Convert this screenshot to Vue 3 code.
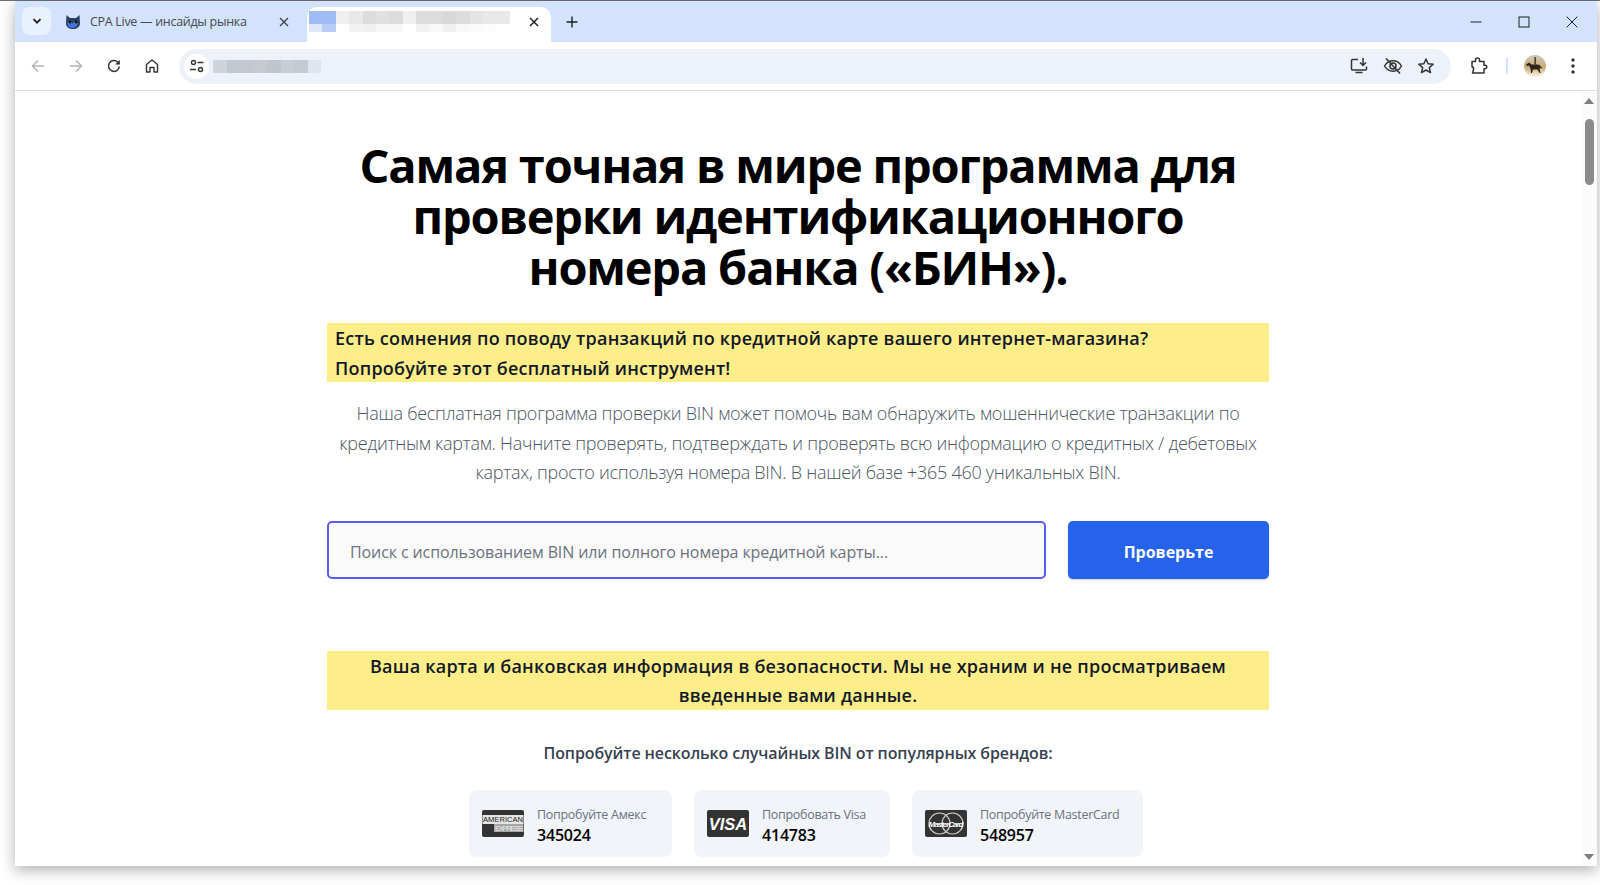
<script setup>
const titleRows = [
  ['#a0bcf5', '#a0bcf5', '#f0f0f0', '#e8e8e8', '#dcdcdc', '#e0e0e0', '#dcdcdc', '#f0f0f0', '#dcdcdc', '#dcdcdc', '#d8d8d8', '#dcdcdc', '#e4e4e4', '#e8e8e8', '#e8e8e8'],
  ['#dfe8fb', '#b9cdf8', '#ffffff', '#f2f2f2', '#f0f0f0', '#f6f6f6', '#f6f6f6', '#ffffff', '#f2f2f2', '#f8f8f8', '#f0f0f0', '#f8f8f8', '#fafafa', '#fcfcfc', '#ffffff']
]
const urlCells = ['#cfd3da', '#c3c7cf', '#c3c7cf', '#c7c9cf', '#c1c5cd', '#c9cdd4', '#c5c9d1', '#dfe4ee']

const brands = [
  { id: 'amex', label: 'Попробуйте Амекс', bin: '345024' },
  { id: 'visa', label: 'Попробовать Visa', bin: '414783' },
  { id: 'mc', label: 'Попробуйте MasterCard', bin: '548957' }
]
</script>

<template>
  <div class="page">
    <div class="window">
      <header class="tabstrip">
        <button class="tab-search">
          <svg width="12" height="12" viewBox="0 0 12 12"><path d="M2.500 4.200 6 7.700l3.500-3.500" fill="none" stroke="#1f1f1f" stroke-width="1.800"/></svg>
        </button>
        <div class="tab">
          <svg class="favicon" width="16" height="16" viewBox="0 0 16 16">
            <path d="M1.500 1 5 4h6l3.500-3 .5 8c0 4-3 6-7 6s-7-2-7-6z" fill="#2c3e63"/>
            <path d="M2.500 9c1-2 3-2.500 4-1l1 2 1-2c1-1.500 3-1 4 1 0 3-2 5-5 5s-5-2-5-5z" fill="#3f74d8"/>
            <circle cx="5" cy="8" r="1.400" fill="#10131a"/>
            <circle cx="11" cy="8" r="1.400" fill="#10131a"/>
          </svg>
          <span class="tab-title">CPA Live — инсайды рынка</span>
          <svg class="tab-close" width="12" height="12" viewBox="0 0 12 12"><path d="M2 2l8 8M10 2l-8 8" stroke="#3c4043" stroke-width="1.300"/></svg>
        </div>
        <div class="tab tab-active">
          <div class="mosaic">
            <div v-for="(row, r) in titleRows" :key="r" class="mosaic-row" :class="{ low: r === 1 }">
              <i v-for="(color, c) in row" :key="c" :style="{ background: color }"></i>
            </div>
          </div>
          <svg class="tab-close" width="12" height="12" viewBox="0 0 12 12"><path d="M2 2l8 8M10 2l-8 8" stroke="#1f1f1f" stroke-width="1.500"/></svg>
        </div>
        <svg class="tab-new" width="14" height="14" viewBox="0 0 14 14"><path d="M7 1.500v11M1.500 7h11" stroke="#1f1f1f" stroke-width="1.400"/></svg>
        <div class="window-controls">
          <svg width="12" height="12" viewBox="0 0 12 12"><path d="M.5 6h11" stroke="#1f1f1f"/></svg>
          <svg width="12" height="12" viewBox="0 0 12 12"><rect x="1" y="1" width="10" height="10" fill="none" stroke="#1f1f1f"/></svg>
          <svg width="12" height="12" viewBox="0 0 12 12"><path d="M.7.700l10.600 10.600M11.300.700.700 11.300" stroke="#1f1f1f"/></svg>
        </div>
      </header>

      <div class="toolbar">
        <div class="nav-icons">
          <svg width="16" height="16" viewBox="0 0 16 16"><path d="M14 8H2.500M8 2.500 2.500 8 8 13.500" fill="none" stroke="#b1b5ba" stroke-width="1.500"/></svg>
          <svg width="16" height="16" viewBox="0 0 16 16"><path d="M2 8h11.500M8 2.500 13.500 8 8 13.500" fill="none" stroke="#b1b5ba" stroke-width="1.500"/></svg>
          <svg width="16" height="16" viewBox="0 0 16 16"><path d="M13.300 8.500A5.400 5.400 0 1 1 11.800 4.200L13.500 6" fill="none" stroke="#333" stroke-width="1.500"/><path d="M13.800 1.800v4.700H9.200z" fill="#333"/></svg>
          <svg width="16" height="16" viewBox="0 0 16 16"><path d="M2.500 14V6.500L8 2l5.500 4.500V14H10V9.500H6V14z" fill="none" stroke="#333" stroke-width="1.400" stroke-linejoin="round"/></svg>
        </div>
        <div class="omnibox">
          <span class="site-chip">
            <svg width="16" height="16" viewBox="0 0 16 16" fill="none" stroke="#333" stroke-width="1.400">
              <circle cx="4.500" cy="4.500" r="2"/><path d="M8.500 4.500h6M1 11.500h6"/><circle cx="11.500" cy="11.500" r="2"/>
            </svg>
          </span>
          <div class="url-mosaic">
            <i v-for="(color, i) in urlCells" :key="i" :style="{ background: color }"></i>
          </div>
          <div class="omni-actions">
            <svg width="20" height="20" viewBox="0 0 20 20" fill="none" stroke="#333" stroke-width="1.500">
              <path d="M9 3.500H3.500a1 1 0 0 0-1 1V13a1 1 0 0 0 1 1h13a1 1 0 0 0 1-1v-2.500M6.500 16.500h7" />
              <path d="M14 2v7M11 6.500l3 3 3-3"/>
            </svg>
            <svg width="20" height="20" viewBox="0 0 20 20" fill="none" stroke="#333" stroke-width="1.500">
              <path d="M1.500 10C3.500 6.500 6.500 4.800 10 4.800s6.500 1.700 8.500 5.200c-2 3.500-5 5.200-8.500 5.200S3.500 13.500 1.500 10z"/>
              <circle cx="10" cy="10" r="3"/><path d="M3 2.500l14 15"/>
            </svg>
            <svg width="18" height="18" viewBox="0 0 18 18"><path d="M9 2l2.100 4.700 5.100.500-3.900 3.400 1.200 5L9 13l-4.500 2.600 1.200-5L1.800 7.200l5.100-.500z" fill="none" stroke="#333" stroke-width="1.500" stroke-linejoin="round"/></svg>
          </div>
        </div>
        <div class="toolbar-right">
          <svg class="puzzle" width="20" height="20" viewBox="0 0 20 20"><path d="M3 5.500h3.500V4a2 2 0 0 1 4 0v1.500H15v3.700h1a1.800 1.800 0 0 1 0 3.600h-1V17H3.500l1-3.200c.4-1.300 0-2.500-1.500-3V9z" fill="none" stroke="#333" stroke-width="1.500" stroke-linejoin="round"/></svg>
          <span class="divider"></span>
          <svg class="avatar" width="22" height="22" viewBox="0 0 22 22">
            <defs>
              <linearGradient id="sky" x1="0" y1="0" x2="0" y2="1">
                <stop offset="0" stop-color="#cfcabd"/><stop offset="0.55" stop-color="#c8ab74"/><stop offset="1" stop-color="#fbf5e4"/>
              </linearGradient>
            </defs>
            <circle cx="11" cy="11" r="11" fill="url(#sky)"/>
            <path d="M2 9.500l3-2 2.500 2h6l2 .5 3 3.500-2-.500-1 .5 1 4.500h-1l-2-3.500H9l-1 3.500H7l-.5-4.500-1.500-3-2 .5z" fill="#2e2518"/>
            <rect x="10.500" y="2" width="1.300" height="7.500" fill="#2e2518"/>
          </svg>
          <svg class="dots" width="4" height="16" viewBox="0 0 4 16" fill="#333"><circle cx="2" cy="2" r="1.700"/><circle cx="2" cy="8" r="1.700"/><circle cx="2" cy="14" r="1.700"/></svg>
        </div>
      </div>

      <div class="viewport">
        <main class="content">
          <h1>Самая точная в мире программа для<br>проверки идентификационного<br>номера банка («БИН»).</h1>
          <p class="highlight">Есть сомнения по поводу транзакций по кредитной карте вашего интернет-магазина?<br>Попробуйте этот бесплатный инструмент!</p>
          <p class="intro">Наша бесплатная программа проверки BIN может помочь вам обнаружить мошеннические транзакции по<br>кредитным картам. Начните проверять, подтверждать и проверять всю информацию о кредитных / дебетовых<br>картах, просто используя номера BIN. В нашей базе +365 460 уникальных BIN.</p>
          <form class="search" @submit.prevent>
            <input type="text" placeholder="Поиск с использованием BIN или полного номера кредитной карты...">
            <button type="submit">Проверьте</button>
          </form>
          <p class="highlight center">Ваша карта и банковская информация в безопасности. Мы не храним и не просматриваем<br>введенные вами данные.</p>
          <p class="try">Попробуйте несколько случайных BIN от популярных брендов:</p>
          <div class="cards">
            <div v-for="brand in brands" :key="brand.id" class="card">
              <svg class="brand" width="42" height="27" viewBox="0 0 42 27">
                <rect width="42" height="27" rx="2" fill="#333"/>
                <template v-if="brand.id === 'amex'">
                  <rect x="0.500" y="5" width="41" height="9" fill="#e4e4e4"/>
                  <rect x="12" y="14" width="29.500" height="8" fill="#a5a5a5"/>
                  <text x="21" y="12.300" class="amex-text" fill="#222" textLength="40">AMERICAN</text>
                  <text x="27" y="20.500" class="amex-text" fill="#eee" textLength="28">EXPRESS</text>
                </template>
                <text v-else-if="brand.id === 'visa'" x="21" y="19.500" class="visa-text" fill="#fff">VISA</text>
                <template v-else>
                  <circle cx="14.500" cy="13.500" r="10.500" fill="none" stroke="#ccc" stroke-width="1.200"/>
                  <circle cx="27.500" cy="13.500" r="10.500" fill="none" stroke="#ccc" stroke-width="1.200"/>
                  <text x="21" y="16.500" class="mc-text" fill="#fff" textLength="35">MasterCard</text>
                </template>
              </svg>
              <div class="card-text">
                <span class="card-label">{{ brand.label }}</span>
                <span class="card-bin">{{ brand.bin }}</span>
              </div>
            </div>
          </div>
        </main>
        <aside class="scrollbar">
          <span class="arrow up"></span>
          <span class="thumb"></span>
          <span class="arrow down"></span>
        </aside>
      </div>
    </div>
  </div>
</template>

<style>
html, body {
  margin: 0;
  background: #fff;
  overflow: hidden;
}
</style>

<style scoped>
.page {
  box-sizing: border-box;
  height: 885px;
  padding: 0 3px 19px 15px;
  border-top: 1px solid #6f7276;
  font-family: "Open Sans", "Noto Sans", sans-serif;
}

.window {
  height: 100%;
  display: flex;
  flex-direction: column;
  overflow: hidden;
  background: #fff;
  box-shadow: 0 4px 14px rgba(0, 0, 0, 0.32);
}

.tabstrip {
  flex: none;
  height: 41px;
  display: flex;
  align-items: flex-start;
  background: #d3e3fd;
}

.tab-search {
  width: 29px;
  height: 28px;
  margin: 6px 0 0 7px;
  padding: 0;
  border: none;
  border-radius: 8px;
  background: #e9f1fe;
  display: flex;
  align-items: center;
  justify-content: center;
}

.tab {
  display: flex;
  align-items: center;
  height: 35px;
  margin-top: 6px;
  box-sizing: border-box;
}

.tab:not(.tab-active) {
  width: 256px;
  padding: 0 17px 6px 14px;
}

.favicon {
  flex: none;
}

.tab-title {
  flex: 1;
  margin-left: 9px;
  font-size: 12.500px;
  letter-spacing: -0.300px;
  color: #474a4f;
  white-space: nowrap;
}

.tab-active {
  width: 244px;
  padding: 0 11px 6px 2px;
  background: #fff;
  border-radius: 10px 10px 0 0;
  justify-content: space-between;
}

.mosaic-row {
  display: flex;
  height: 13px;
}

.mosaic-row.low {
  height: 8px;
}

.mosaic-row i {
  width: 13.400px;
}

.tab-new {
  margin: 14px 0 0 14px;
}

.window-controls {
  margin: 15px 19px 0 auto;
  display: flex;
  gap: 36px;
}

.toolbar {
  flex: none;
  height: 49px;
  box-sizing: border-box;
  display: flex;
  align-items: center;
  background: #fff;
  border-bottom: 1px solid #e0e0e0;
  border-radius: 8px 8px 0 0;
}

.nav-icons {
  display: flex;
  gap: 22px;
  padding-left: 15px;
  width: 149px;
  box-sizing: border-box;
}

.omnibox {
  width: 1272px;
  height: 35px;
  margin-left: 15px;
  display: flex;
  align-items: center;
  background: #edf2fa;
  border-radius: 18px;
}

.site-chip {
  width: 25px;
  height: 25px;
  margin-left: 5px;
  border-radius: 50%;
  background: #fff;
  display: flex;
  align-items: center;
  justify-content: center;
}

.url-mosaic {
  display: flex;
  height: 13px;
  margin-left: 4px;
}

.url-mosaic i {
  width: 13.500px;
}

.omni-actions {
  margin-left: auto;
  padding-right: 16px;
  display: flex;
  align-items: center;
  gap: 14px;
}

.toolbar-right {
  flex: 1;
  display: flex;
  align-items: center;
  padding-left: 18px;
}

.divider {
  width: 2px;
  height: 16px;
  margin-left: 17px;
  background: #d3e3fd;
}

.avatar {
  margin-left: 16px;
}

.dots {
  margin-left: 25px;
}

.viewport {
  flex: 1;
  min-height: 0;
  display: flex;
  overflow: hidden;
}

.content {
  flex: 1;
  min-width: 0;
  padding-top: 49px;
  display: flex;
  flex-direction: column;
  align-items: center;
  color: #111827;
}

h1 {
  margin: 0 0 30px;
  font-size: 47px;
  line-height: 51px;
  font-weight: 700;
  letter-spacing: -1.200px;
  text-align: center;
  color: #000;
}

.highlight {
  box-sizing: border-box;
  width: 942px;
  height: 59px;
  margin: 0;
  padding: 1px 8px 0;
  background: #fdee8a;
  font-size: 18px;
  line-height: 29.500px;
  font-weight: 600;
  letter-spacing: 0.230px;
  white-space: nowrap;
}

.highlight.center {
  text-align: center;
}

.intro {
  margin: 17px 0 33px;
  width: 942px;
  font-size: 18px;
  line-height: 29.500px;
  font-weight: 300;
  letter-spacing: -0.270px;
  text-align: center;
  white-space: nowrap;
  color: #4b5563;
}

.search {
  width: 942px;
  display: flex;
  justify-content: space-between;
  margin-bottom: 72px;
}

.search input {
  box-sizing: border-box;
  width: 719px;
  height: 58px;
  padding: 5px 21px 0;
  border: 2px solid #5a5df0;
  border-radius: 5px;
  outline: none;
  background: #fafafa;
  font-family: inherit;
  font-size: 16px;
  letter-spacing: -0.100px;
}

.search input::placeholder {
  color: #6b7280;
  opacity: 1;
}

.search button {
  width: 201px;
  height: 58px;
  padding: 5px 0 0;
  border: none;
  border-radius: 5px;
  background: #2563eb;
  color: #fff;
  font-family: inherit;
  font-size: 16px;
  font-weight: 700;
  box-shadow: 0 1px 2px rgba(0, 0, 0, 0.2);
}

.try {
  margin: 30px 0 24px;
  font-size: 16px;
  line-height: 26px;
  font-weight: 600;
  letter-spacing: -0.100px;
  color: #374151;
}

.cards {
  margin-left: 16px;
  display: grid;
  grid-template-columns: 203px 196px 231px;
  gap: 22px;
}

.card {
  height: 67px;
  padding-left: 13px;
  display: flex;
  align-items: center;
  gap: 13px;
  border-radius: 8px;
  background: #f1f4f9;
}

.brand {
  flex: none;
}

.amex-text {
  font-family: "Liberation Sans", sans-serif;
  font-size: 7.500px;
  text-anchor: middle;
}

.visa-text {
  font-family: "Liberation Sans", sans-serif;
  font-size: 16.500px;
  font-weight: 700;
  font-style: italic;
  text-anchor: middle;
}

.mc-text {
  font-family: "Liberation Sans", sans-serif;
  font-size: 8px;
  font-weight: 700;
  font-style: italic;
  text-anchor: middle;
}

.card-text {
  padding-top: 5px;
  display: flex;
  flex-direction: column;
  white-space: nowrap;
}

.card-label {
  font-size: 12.500px;
  line-height: 19px;
  letter-spacing: -0.300px;
  color: #6b7280;
}

.card-bin {
  font-size: 16px;
  line-height: 23px;
  font-weight: 600;
  letter-spacing: -0.200px;
  color: #000;
}

.scrollbar {
  flex: none;
  width: 16px;
  background: #fbfbfb;
  display: flex;
  flex-direction: column;
  align-items: center;
}

.arrow {
  width: 0;
  height: 0;
  border-left: 5px solid transparent;
  border-right: 5px solid transparent;
}

.arrow.up {
  margin-top: 7px;
  border-bottom: 6px solid #7f7f7f;
}

.arrow.down {
  margin-top: auto;
  margin-bottom: 6px;
  border-top: 6px solid #7f7f7f;
}

.thumb {
  width: 9px;
  height: 66px;
  margin-top: 15px;
  border-radius: 5px;
  background: #8b8b8b;
}
</style>
